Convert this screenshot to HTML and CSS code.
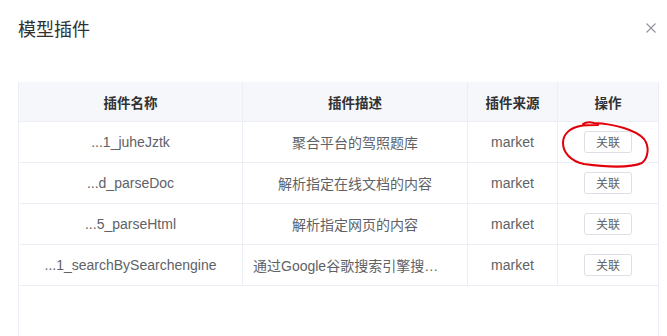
FILE: index.html
```html
<!DOCTYPE html>
<html lang="zh-CN">
<head>
<meta charset="utf-8">
<title>模型插件</title>
<link rel="stylesheet" href="styles.css">
</head>
<body>
<div class="dialog">
  <div class="dialog-header">
    <span class="dialog-title">模型插件</span>
    <button class="close-btn" aria-label="关闭">
      <svg width="10" height="10" viewBox="0 0 10 10"><path d="M0.5 0.5 L9.5 9.5 M9.5 0.5 L0.5 9.5" stroke="#909399" stroke-width="1.1" fill="none"/></svg>
    </button>
  </div>
  <div class="table">
    <div class="row head">
      <div class="cell">插件名称</div>
      <div class="cell">插件描述</div>
      <div class="cell">插件来源</div>
      <div class="cell">操作</div>
    </div>
    <div class="row">
      <div class="cell">...1_juheJztk</div>
      <div class="cell">聚合平台的驾照题库</div>
      <div class="cell">market</div>
      <div class="cell"><button class="btn">关联</button></div>
    </div>
    <div class="row">
      <div class="cell">...d_parseDoc</div>
      <div class="cell">解析指定在线文档的内容</div>
      <div class="cell">market</div>
      <div class="cell"><button class="btn">关联</button></div>
    </div>
    <div class="row">
      <div class="cell">...5_parseHtml</div>
      <div class="cell">解析指定网页的内容</div>
      <div class="cell">market</div>
      <div class="cell"><button class="btn">关联</button></div>
    </div>
    <div class="row">
      <div class="cell">...1_searchBySearchengine</div>
      <div class="cell desc">通过Google谷歌搜索引擎搜…</div>
      <div class="cell">market</div>
      <div class="cell"><button class="btn">关联</button></div>
    </div>
  </div>
</div>
<svg class="annotation" width="667" height="336" viewBox="0 0 667 336">
  <path d="M583,124 C586,122 590,122 594,123 C615,124 636,130 644,139 C650,147 648,158 642,163 C630,168 605,167 584,164 C570,161 563,152 563,143 C563,134 570,128 580,126 C586,125 592,125 598,125" stroke="#e3000b" stroke-width="2" fill="none" stroke-linecap="round"/>
</svg>
</body>
</html>
```
FILE: styles.css
```css
* { box-sizing: border-box; }
html, body { margin: 0; padding: 0; background: #fff; }
body {
  font-family: "Liberation Sans", "Noto Sans CJK SC", sans-serif;
  color: #606266;
  overflow: hidden;
  height: 336px;
}
.dialog { padding: 0 0 0 18px; }
.dialog-header {
  display: flex;
  justify-content: space-between;
  align-items: flex-start;
  padding-top: 16px;
  height: 82px;
}
.dialog-title {
  font-family: "Noto Sans CJK SC", sans-serif;
  font-size: 18px;
  line-height: 24px;
  color: #303133;
}
.close-btn {
  border: 0;
  background: none;
  padding: 0;
  margin: 7px 11px 0 0;
  width: 10px;
  height: 10px;
  display: flex;
}
.table {
  width: 641px;
  height: 260px;
  border-left: 1px solid #ebeef5;
  border-right: 1px solid #ebeef5;
}
.row {
  display: grid;
  grid-template-columns: 224px 225px 90px 100px;
  height: 41px;
  border-bottom: 1px solid #ebeef5;
}
.row.head {
  height: 40px;
  background: #f5f7fa;
}
.cell {
  display: flex;
  align-items: center;
  justify-content: center;
  font-size: 14px;
  border-right: 1px solid #ebeef5;
  padding: 0 10px;
  white-space: nowrap;
  overflow: hidden;
  min-width: 0;
}
.cell:last-child { border-right: 0; }
.head .cell {
  font-family: "Noto Sans CJK SC", sans-serif;
  font-weight: 700;
  color: #303133;
  font-size: 13.5px;
}
.cell.desc {
  justify-content: flex-start;
}
.btn {
  width: 48px;
  height: 22px;
  border: 1px solid #dcdfe6;
  border-radius: 3px;
  background: #fff;
  color: #606266;
  font-family: "Noto Sans CJK SC", sans-serif;
  font-size: 12px;
  line-height: 20px;
  padding: 0;
}
.annotation {
  position: absolute;
  left: 0;
  top: 0;
  pointer-events: none;
}
```
